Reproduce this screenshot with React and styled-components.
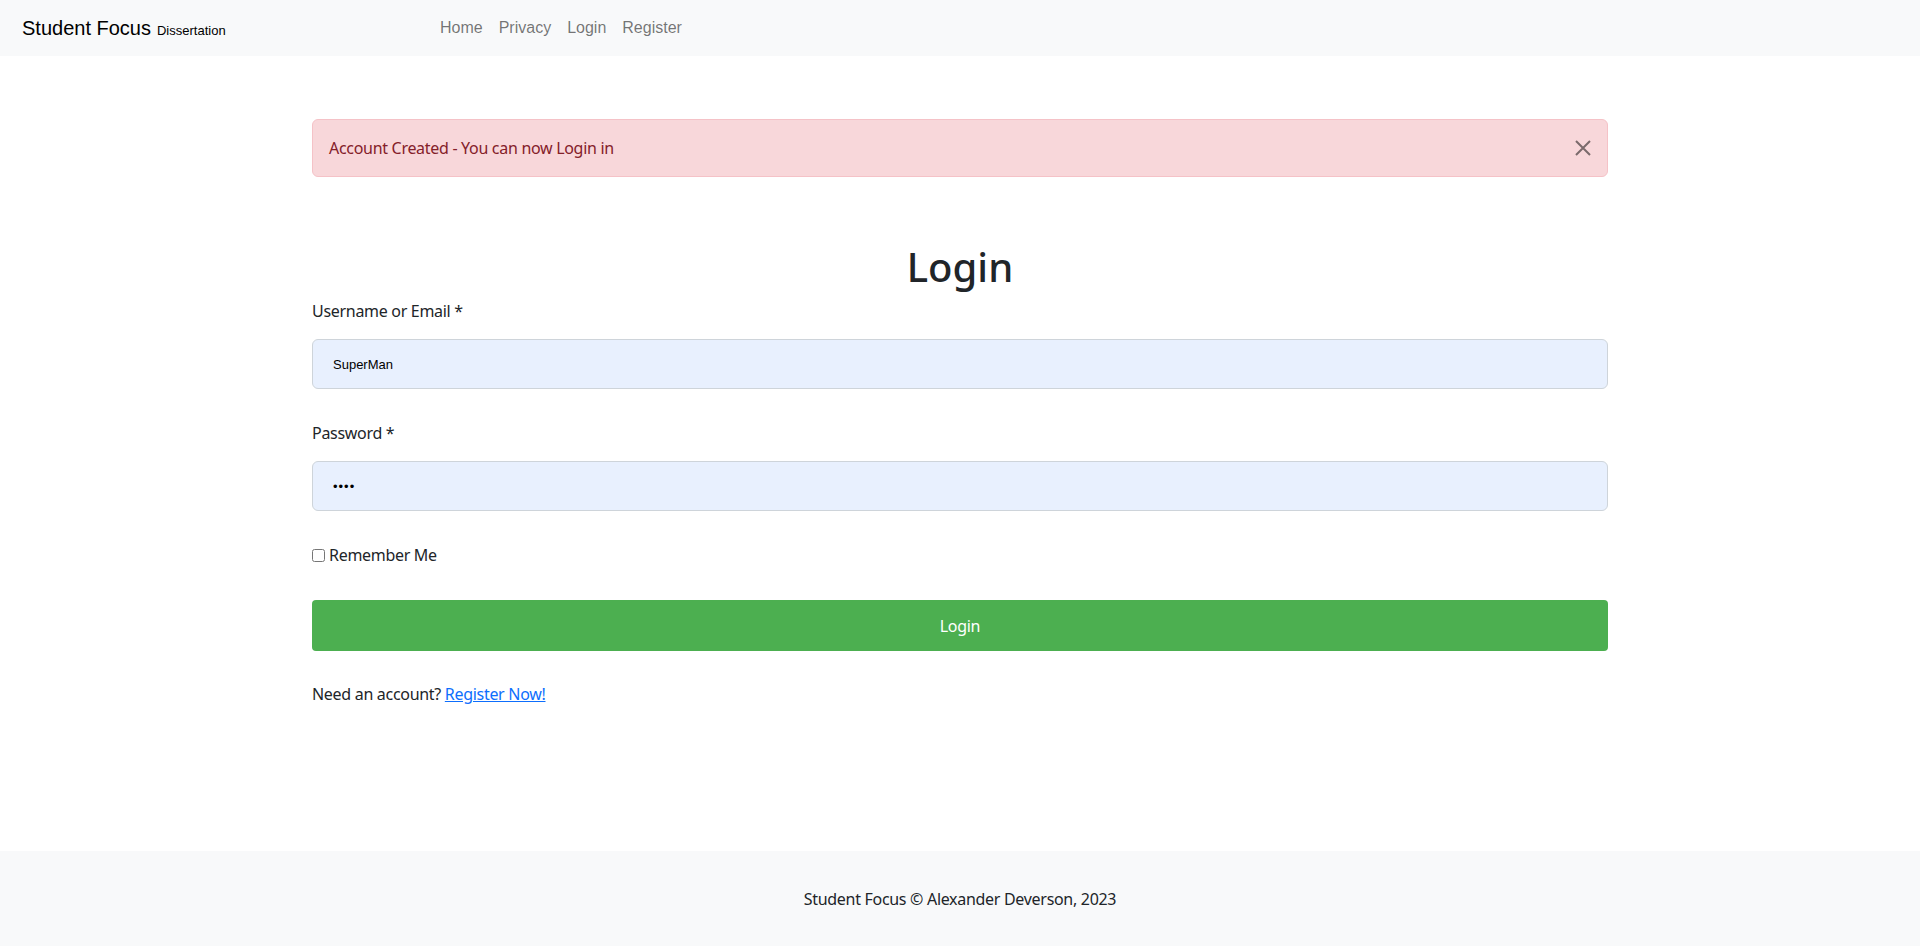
import React from "react";
import styled, { createGlobalStyle } from "styled-components";

const Global = createGlobalStyle`
  html, body { margin: 0; padding: 0; }
  body {
    font-family: "Noto Sans", "Open Sans", sans-serif;
    font-size: 16px;
    line-height: 1.5;
    color: #212529;
    background: #fff;
  }
  * { box-sizing: border-box; }
`;

const Page = styled.div`
  min-height: 100vh;
  display: flex;
  flex-direction: column;
`;

const NavBar = styled.nav`
  height: 56px;
  background: #f8f9fa;
  display: flex;
  align-items: center;
  padding-left: 22px;
  font-family: "Liberation Sans", Arial, sans-serif;
`;

const Brand = styled.a`
  width: 410px;
  display: flex;
  align-items: baseline;
  gap: 6px;
  color: #000;
  text-decoration: none;
  font-size: 20px;
  line-height: 1;
`;

const BrandSub = styled.small`
  font-size: 13px;
`;

const NavLinks = styled.ul`
  display: flex;
  list-style: none;
  margin: 0;
  padding: 0;
`;

const NavLink = styled.a`
  display: block;
  padding: 8px;
  font-size: 16px;
  line-height: 24px;
  color: rgba(0, 0, 0, 0.55);
  text-decoration: none;
`;

const Main = styled.main`
  flex: 1;
  width: 1320px;
  margin: 0 auto;
  padding: 63px 12px 40px;
  letter-spacing: -0.3px;
`;

const Alert = styled.div`
  display: flex;
  align-items: center;
  justify-content: space-between;
  background: #f8d7da;
  border: 1px solid #f5c2c7;
  color: #842029;
  border-radius: 6px;
  padding: 16px 16px;
  line-height: 24px;
`;

const CloseBtn = styled.button`
  border: 0;
  background: transparent;
  padding: 0;
  margin-right: -1px;
  width: 18px;
  height: 18px;
  display: flex;
  align-items: center;
  justify-content: center;
  opacity: 0.5;
  cursor: pointer;
`;

const Title = styled.h1`
  margin: 66px 0 8px;
  text-align: center;
  font-size: 40px;
  font-weight: 500;
  line-height: 48px;
  letter-spacing: 0;
`;

const Field = styled.div`
  display: flex;
  flex-direction: column;
  gap: 16px;
  margin-bottom: ${(p) => p.$mb || 32}px;
`;

const Label = styled.label`
  line-height: 24px;
`;

const Input = styled.input`
  height: 50px;
  width: 100%;
  border: 1px solid #ced4da;
  border-radius: 6px;
  background: #e8f0fe;
  padding: 0 20px;
  font-family: "Liberation Sans", Arial, sans-serif;
  font-size: 13px;
  color: #000;
  outline: none;
  letter-spacing: ${(p) => (p.type === "password" ? "1px" : "0")};
`;

const CheckRow = styled.label`
  display: flex;
  align-items: center;
  gap: 4px;
  line-height: 24px;
  margin-bottom: 33px;
`;

const Check = styled.input`
  margin: 0;
  width: 13px;
  height: 13px;
`;

const SubmitBtn = styled.button`
  width: 100%;
  height: 51px;
  border: 0;
  border-radius: 4px;
  background: #4caf50;
  color: #fff;
  font-family: inherit;
  font-size: 16px;
  letter-spacing: -0.3px;
  cursor: pointer;
  margin-bottom: 31px;
`;

const Note = styled.p`
  margin: 0;
  line-height: 24px;
`;

const Link = styled.a`
  color: #0d6efd;
  text-decoration: underline;
`;

const Footer = styled.footer`
  height: 95px;
  background: #f8f9fa;
  display: flex;
  align-items: center;
  justify-content: center;
  color: #212529;
  letter-spacing: -0.3px;
`;

export default function App() {
  return (
    <Page>
      <Global />
      <NavBar>
        <Brand href="#">
          Student Focus <BrandSub>Dissertation</BrandSub>
        </Brand>
        <NavLinks>
          {["Home", "Privacy", "Login", "Register"].map((l) => (
            <li key={l}>
              <NavLink href="#">{l}</NavLink>
            </li>
          ))}
        </NavLinks>
      </NavBar>
      <Main>
        <Alert>
          <span>Account Created - You can now Login in</span>
          <CloseBtn aria-label="Close">
            <svg width="16" height="16" viewBox="0 0 16 16">
              <path d="M1 1L15 15M15 1L1 15" stroke="#000" strokeWidth="2" />
            </svg>
          </CloseBtn>
        </Alert>
        <Title>Login</Title>
        <form onSubmit={(e) => e.preventDefault()}>
          <Field>
            <Label>Username or Email *</Label>
            <Input type="text" defaultValue="SuperMan" />
          </Field>
          <Field $mb={32}>
            <Label>Password *</Label>
            <Input type="password" defaultValue="1234" />
          </Field>
          <CheckRow>
            <Check type="checkbox" />
            Remember Me
          </CheckRow>
          <SubmitBtn type="submit">Login</SubmitBtn>
        </form>
        <Note>
          Need an account? <Link href="#">Register Now!</Link>
        </Note>
      </Main>
      <Footer>Student Focus © Alexander Deverson, 2023</Footer>
    </Page>
  );
}
